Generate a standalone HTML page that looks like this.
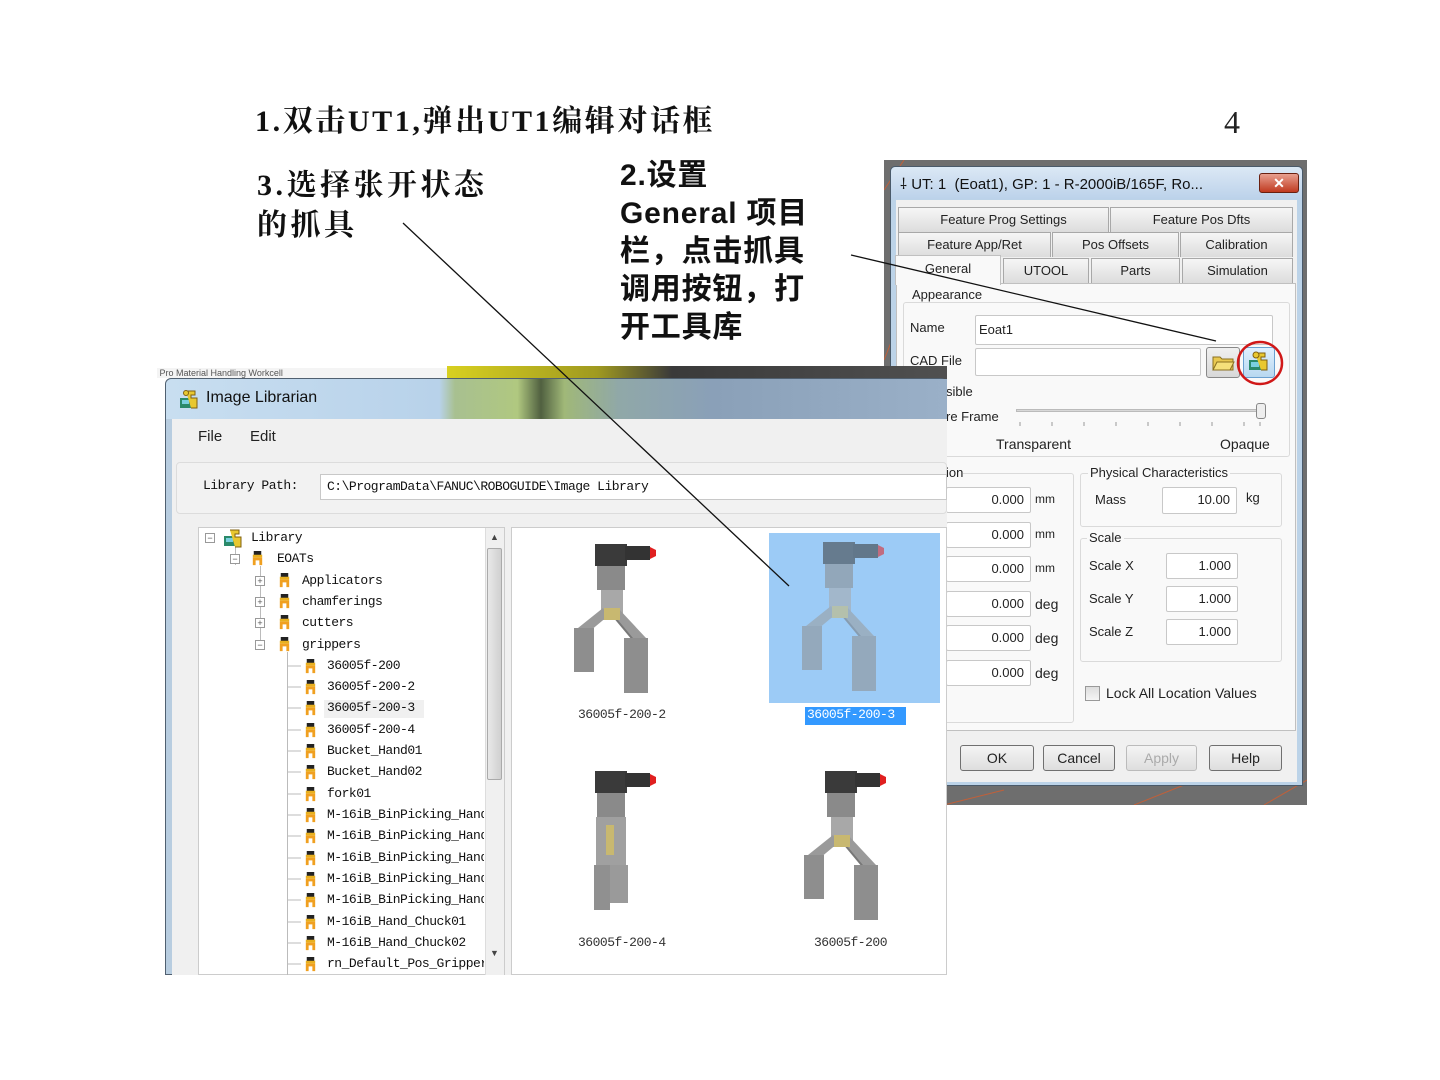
<!DOCTYPE html>
<html><head><meta charset="utf-8"><style>
*{margin:0;padding:0;box-sizing:border-box}
body{width:1440px;height:1080px;background:#fff;position:relative;overflow:hidden;font-family:"Liberation Sans","Noto Sans CJK SC",sans-serif}
.a{position:absolute}
.cn{font-family:"Liberation Serif","Noto Serif CJK SC",serif;font-weight:bold;font-size:30px;color:#111;white-space:nowrap}
.cs{font-family:"Liberation Sans","Noto Sans CJK SC",sans-serif;font-weight:bold;font-size:30px;color:#111;white-space:nowrap;line-height:38px;letter-spacing:0.8px}
.t{font-size:13px;color:#222;white-space:nowrap}
.tab{position:absolute;height:25px;border:1px solid #a8a8a8;border-bottom:none;background:linear-gradient(#f6f6f6,#dcdcdc);font-size:13px;text-align:center;line-height:24px;color:#222}
.in{position:absolute;background:#fff;border:1px solid #c8c8c8;border-radius:2px;font-size:13px;text-align:right;padding-right:6px;line-height:24px;color:#222}
.grp{position:absolute;border:1px solid #dadada;border-radius:3px}
.btn{position:absolute;height:26px;border:1px solid #707070;border-radius:3px;background:linear-gradient(#f4f4f4,#dedede);font-size:14px;text-align:center;line-height:24px;color:#222}
.tr{position:absolute;font-family:"Liberation Mono","Noto Serif CJK SC",monospace;font-size:13px;color:#111;white-space:nowrap;letter-spacing:-0.5px}
.ic{position:absolute;width:15px;height:15px}
.ex{position:absolute;width:10px;height:10px;border:1px solid #999;background:#fff;font-size:9px;line-height:8px;text-align:center;color:#555}
</style></head><body>

<div class="a cn" style="left:255px;top:96px;letter-spacing:2.6px">1.双击UT1,弹出UT1编辑对话框</div>
<div class="a" style="left:1224px;top:104px;font-family:'Liberation Serif',serif;font-size:32px;color:#222">4</div>
<div class="a cn" style="left:257px;top:166px;line-height:40px;letter-spacing:3.5px">3.选择张开状态<br>的抓具</div>
<div class="a cs" style="left:620px;top:157px">2.设置<br>General 项目<br>栏，点击抓具<br>调用按钮，打<br>开工具库</div>

<!-- Right dialog -->
<div class="a" style="left:884px;top:160px;width:423px;height:645px;background:#6e6e6e"></div>
<svg class="a" style="left:884px;top:160px" width="423" height="645"><g stroke="#c0603a" stroke-width="1" fill="none"><path d="M0 30 L20 0 M0 200 L8 180 M0 420 L6 410 M60 645 L120 630 M250 645 L300 625 M380 645 L423 620"/></g></svg>
<div class="a" style="left:890px;top:166px;width:413px;height:620px;background:#bcd3e8;border:1px solid #4a5a6a;border-radius:5px 5px 0 0"></div>
<div class="a" style="left:891px;top:167px;width:411px;height:32px;background:linear-gradient(#dbe8f5,#bcd2ea);border-radius:5px 5px 0 0"></div>
<div class="a t" style="left:900px;top:174px;font-size:15px;color:#111">⸸ UT: 1 &nbsp;(Eoat1), GP: 1 - R-2000iB/165F, Ro...</div>
<div class="a" style="left:1259px;top:173px;width:40px;height:20px;background:linear-gradient(#e8a090,#c03a20);border:1px solid #6a2010;border-radius:3px;color:#fff;font-size:14px;font-weight:bold;text-align:center;line-height:18px">✕</div>
<div class="a" style="left:896px;top:200px;width:401px;height:582px;background:#f0f0f0"></div>
<div class="tab" style="left:898px;top:207px;width:211px">Feature Prog Settings</div>
<div class="tab" style="left:1110px;top:207px;width:183px">Feature Pos Dfts</div>
<div class="tab" style="left:898px;top:232px;width:153px">Feature App/Ret</div>
<div class="tab" style="left:1052px;top:232px;width:127px">Pos Offsets</div>
<div class="tab" style="left:1180px;top:232px;width:113px">Calibration</div>
<div class="tab" style="left:1003px;top:258px;width:86px">UTOOL</div>
<div class="tab" style="left:1091px;top:258px;width:89px">Parts</div>
<div class="tab" style="left:1182px;top:258px;width:111px">Simulation</div>
<div class="a" style="left:896px;top:283px;width:400px;height:448px;background:#f9f9f9;border:1px solid #c0c0c0"></div>
<div class="tab" style="left:895px;top:255px;width:106px;height:30px;background:#f9f9f9;border-color:#c0c0c0;line-height:26px">General</div>
<div class="grp" style="left:903px;top:302px;width:387px;height:155px"></div>
<div class="a t" style="left:910px;top:287px;background:#f9f9f9;padding:0 2px">Appearance</div>
<div class="a t" style="left:910px;top:320px">Name</div>
<div class="in" style="left:975px;top:315px;width:298px;height:30px;text-align:left;padding-left:3px;line-height:28px">Eoat1</div>
<div class="a t" style="left:910px;top:353px">CAD File</div>
<div class="in" style="left:975px;top:348px;width:226px;height:28px"></div>
<div class="a" style="left:1206px;top:347px;width:34px;height:31px;border:1px solid #888;border-radius:3px;background:linear-gradient(#f0f0f0,#d8d8d8)"></div>
<svg class="a" style="left:1211px;top:352px" width="24" height="20"><path d="M2 5h7l2 2h11v11H2z" fill="#e8c850" stroke="#8a7020"/><path d="M2 18l4-8h17l-4 8z" fill="#f5e07a" stroke="#8a7020"/></svg>
<div class="a" style="left:1243px;top:347px;width:32px;height:31px;border:1px solid #6aa0d0;border-radius:3px;background:linear-gradient(#e0f0ff,#b8d8f0)"></div>
<svg class="a" style="left:1247px;top:350px" width="24" height="24"><rect x="2" y="10" width="12" height="10" fill="#2a8a6a"/><rect x="4" y="12" width="8" height="5" fill="#7ad0e0"/><path d="M8 3h10v4h-4v3h6v10h-6" fill="#e8c830" stroke="#806010"/><circle cx="9" cy="5" r="3" fill="#e8c830" stroke="#806010"/></svg>
<svg class="a" style="left:1234px;top:338px" width="52" height="52"><ellipse cx="26" cy="25" rx="22" ry="21" fill="none" stroke="#d01818" stroke-width="2.5"/></svg>
<div class="a t" style="left:946px;top:384px">sible</div>
<div class="a t" style="left:946px;top:409px">re Frame</div>
<div class="a" style="left:1016px;top:409px;width:246px;height:3px;background:#d8d8d8;border:1px solid #bbb"></div>
<div class="a" style="left:1256px;top:403px;width:10px;height:16px;background:#eee;border:1px solid #888;border-radius:3px"></div>
<svg class="a" style="left:1016px;top:422px" width="250" height="6"><g stroke="#999"><path d="M4 0v4M36 0v4M68 0v4M100 0v4M132 0v4M164 0v4M196 0v4M228 0v4M244 0v4"/></g></svg>
<div class="a t" style="left:996px;top:436px;font-size:14px">Transparent</div>
<div class="a t" style="left:1220px;top:436px;font-size:14px">Opaque</div>
<div class="grp" style="left:940px;top:473px;width:134px;height:250px"></div>
<div class="a t" style="left:946px;top:465px;background:#f9f9f9">ion</div>
<div class="in" style="left:946px;top:487px;width:85px;height:26px">0.000</div><div class="a t" style="left:1035px;top:492px;font-size:12px">mm</div>
<div class="in" style="left:946px;top:522px;width:85px;height:26px">0.000</div><div class="a t" style="left:1035px;top:527px;font-size:12px">mm</div>
<div class="in" style="left:946px;top:556px;width:85px;height:26px">0.000</div><div class="a t" style="left:1035px;top:561px;font-size:12px">mm</div>
<div class="in" style="left:946px;top:591px;width:85px;height:26px">0.000</div><div class="a t" style="left:1035px;top:596px;font-size:14px">deg</div>
<div class="in" style="left:946px;top:625px;width:85px;height:26px">0.000</div><div class="a t" style="left:1035px;top:630px;font-size:14px">deg</div>
<div class="in" style="left:946px;top:660px;width:85px;height:26px">0.000</div><div class="a t" style="left:1035px;top:665px;font-size:14px">deg</div>
<div class="grp" style="left:1080px;top:473px;width:202px;height:54px"></div>
<div class="a t" style="left:1088px;top:465px;background:#f9f9f9;padding:0 2px">Physical Characteristics</div>
<div class="a t" style="left:1095px;top:492px">Mass</div>
<div class="in" style="left:1162px;top:487px;width:75px;height:27px">10.00</div>
<div class="a t" style="left:1246px;top:490px">kg</div>
<div class="grp" style="left:1080px;top:538px;width:202px;height:124px"></div>
<div class="a t" style="left:1087px;top:530px;background:#f9f9f9;padding:0 2px">Scale</div>
<div class="a t" style="left:1089px;top:558px">Scale X</div><div class="in" style="left:1166px;top:553px;width:72px;height:26px">1.000</div>
<div class="a t" style="left:1089px;top:591px">Scale Y</div><div class="in" style="left:1166px;top:586px;width:72px;height:26px">1.000</div>
<div class="a t" style="left:1089px;top:624px">Scale Z</div><div class="in" style="left:1166px;top:619px;width:72px;height:26px">1.000</div>
<div class="a" style="left:1085px;top:686px;width:15px;height:15px;border:1px solid #999;background:linear-gradient(#ddd,#f5f5f5)"></div>
<div class="a t" style="left:1106px;top:685px;font-size:14px">Lock All Location Values</div>
<div class="btn" style="left:960px;top:745px;width:74px">OK</div>
<div class="btn" style="left:1043px;top:745px;width:72px">Cancel</div>
<div class="btn" style="left:1126px;top:745px;width:71px;color:#aaa;border-color:#bbb">Apply</div>
<div class="btn" style="left:1209px;top:745px;width:73px">Help</div>

<!-- Left window -->
<div class="a" style="left:157px;top:368px;width:290px;height:10px;background:#f4f4f4;font-size:9px;color:#555;line-height:10px;overflow:hidden">&nbsp;Pro Material Handling Workcell</div>
<div class="a" style="left:447px;top:366px;width:500px;height:14px;background:linear-gradient(90deg,#d8d020,#a09a20 30%,#3a3a3a 45%,#505050)"></div>
<div class="a" style="left:165px;top:378px;width:782px;height:597px;background:#b8cde0;border:1px solid #506070;border-radius:6px 6px 0 0"></div>
<div class="a" style="left:166px;top:379px;width:781px;height:40px;border-radius:6px 0 0 0;background:linear-gradient(90deg,#c8def0 0%,#b8d2ea 35%,#a8c090 37%,#b0c880 45%,#506040 48%,#a0b878 51%,#90a8a8 58%,#8aa0b8 70%,#9ab0c8 100%)"></div>
<svg class="a" style="left:179px;top:389px" width="22" height="22"><rect x="1" y="9" width="11" height="10" fill="#2a8a6a"/><rect x="3" y="11" width="7" height="4" fill="#7ad0e0"/><path d="M7 2h9v4h-4v3h6v10h-6" fill="#e8c830" stroke="#806010"/><circle cx="7" cy="4" r="2.5" fill="#e8c830" stroke="#806010"/></svg>
<div class="a t" style="left:206px;top:389px;font-size:16px;color:#111">Image Librarian</div>
<div class="a" style="left:172px;top:419px;width:775px;height:556px;background:#f0f0f0"></div>
<div class="a t" style="left:198px;top:428px;font-size:15px">File</div>
<div class="a t" style="left:250px;top:428px;font-size:15px">Edit</div>
<div class="a" style="left:176px;top:462px;width:771px;height:52px;border:1px solid #dcdcdc;border-radius:4px;background:#f2f2f2"></div>
<div class="tr" style="left:203px;top:478px">Library Path:</div>
<div class="a" style="left:320px;top:474px;width:627px;height:26px;background:#fff;border:1px solid #c8c8c8"></div>
<div class="tr" style="left:327px;top:479px">C:\ProgramData\FANUC\ROBOGUIDE\Image Library</div>
<div class="a" style="left:198px;top:527px;width:307px;height:448px;background:#fff;border:1px solid #ccc"></div>
<div class="a" style="left:485px;top:528px;width:19px;height:447px;background:#f0f0f0;border-left:1px solid #ddd"></div>
<div class="a" style="left:487px;top:548px;width:15px;height:232px;background:linear-gradient(90deg,#e8e8e8,#d0d0d0);border:1px solid #aaa;border-radius:2px"></div>
<div class="a" style="left:490px;top:532px;font-size:9px;color:#444">▲</div>
<div class="a" style="left:490px;top:948px;font-size:9px;color:#444">▼</div>
<div class="a" style="left:511px;top:527px;width:436px;height:448px;background:#fff;border:1px solid #ccc"></div>

<div class="a" style="left:235px;top:545px;width:1px;height:20px;background:#bbb"></div>
<div class="a" style="left:260px;top:566px;width:1px;height:80px;background:#bbb"></div>
<div class="a" style="left:287px;top:652px;width:1px;height:323px;background:#bbb"></div>

<div class="ex" style="left:205px;top:533px">−</div>
<svg class="ic" style="left:223px;top:528px;width:22px;height:20px" viewBox="0 0 22 20"><rect x="1" y="8" width="11" height="10" fill="#2a8a6a"/><rect x="3" y="10" width="7" height="4" fill="#7ad0e0"/><path d="M7 2h9v4h-4v3h6v10h-6" fill="#e8c830" stroke="#806010"/></svg>
<div class="tr" style="left:251px;top:530px">Library</div>
<div class="ex" style="left:230px;top:554px">−</div>
<div class="tr" style="left:277px;top:551px">EOATs</div>
<div class="ex" style="left:255px;top:576px">+</div><div class="tr" style="left:302px;top:573px">Applicators</div>
<div class="ex" style="left:255px;top:597px">+</div><div class="tr" style="left:302px;top:594px">chamferings</div>
<div class="ex" style="left:255px;top:618px">+</div><div class="tr" style="left:302px;top:615px">cutters</div>
<div class="ex" style="left:255px;top:640px">−</div><div class="tr" style="left:302px;top:637px">grippers</div>
<svg width="0" height="0" style="position:absolute"><defs><symbol id="g" viewBox="0 0 16 16"><rect x="4" y="0" width="8" height="5" fill="#222"/><rect x="3" y="4" width="10" height="3" fill="#e8b020"/><path d="M3 7h10v8h-3v-5h-4v5H3z" fill="#f0a020"/></symbol></defs></svg>
<svg class="ic" style="left:250px;top:551px"><use href="#g"/></svg>
<svg class="ic" style="left:277px;top:573px"><use href="#g"/></svg>
<svg class="ic" style="left:277px;top:594px"><use href="#g"/></svg>
<svg class="ic" style="left:277px;top:615px"><use href="#g"/></svg>
<svg class="ic" style="left:277px;top:637px"><use href="#g"/></svg>

<div class="a" style="left:324px;top:700px;width:100px;height:18px;background:#f0f0f0"></div>
<div class="tr" style="left:327px;top:658px">36005f-200</div>
<div class="tr" style="left:327px;top:679px">36005f-200-2</div>
<div class="tr" style="left:327px;top:700px">36005f-200-3</div>
<div class="tr" style="left:327px;top:722px">36005f-200-4</div>
<div class="tr" style="left:327px;top:743px">Bucket_Hand01</div>
<div class="tr" style="left:327px;top:764px">Bucket_Hand02</div>
<div class="tr" style="left:327px;top:786px">fork01</div>
<div class="tr" style="left:327px;top:807px;width:157px;overflow:hidden">M-16iB_BinPicking_Hand</div>
<div class="tr" style="left:327px;top:828px;width:157px;overflow:hidden">M-16iB_BinPicking_Hand</div>
<div class="tr" style="left:327px;top:850px;width:157px;overflow:hidden">M-16iB_BinPicking_Hand</div>
<div class="tr" style="left:327px;top:871px;width:157px;overflow:hidden">M-16iB_BinPicking_Hand</div>
<div class="tr" style="left:327px;top:892px;width:157px;overflow:hidden">M-16iB_BinPicking_Hand</div>
<div class="tr" style="left:327px;top:914px">M-16iB_Hand_Chuck01</div>
<div class="tr" style="left:327px;top:935px">M-16iB_Hand_Chuck02</div>
<div class="tr" style="left:327px;top:956px;width:157px;height:19px;overflow:hidden">rn_Default_Pos_Gripper</div>
<svg class="a" style="left:287px;top:650px" width="40" height="325">
<g stroke="#bbb"><path d="M0 16h14M0 37h14M0 58h14M0 80h14M0 101h14M0 122h14M0 144h14M0 165h14M0 186h14M0 208h14M0 229h14M0 250h14M0 272h14M0 293h14M0 314h14"/></g>
<g><use href="#g" x="16" y="9" width="15" height="15"/><use href="#g" x="16" y="30" width="15" height="15"/><use href="#g" x="16" y="51" width="15" height="15"/><use href="#g" x="16" y="73" width="15" height="15"/><use href="#g" x="16" y="94" width="15" height="15"/><use href="#g" x="16" y="115" width="15" height="15"/><use href="#g" x="16" y="137" width="15" height="15"/><use href="#g" x="16" y="158" width="15" height="15"/><use href="#g" x="16" y="179" width="15" height="15"/><use href="#g" x="16" y="201" width="15" height="15"/><use href="#g" x="16" y="222" width="15" height="15"/><use href="#g" x="16" y="243" width="15" height="15"/><use href="#g" x="16" y="265" width="15" height="15"/><use href="#g" x="16" y="286" width="15" height="15"/><use href="#g" x="16" y="307" width="15" height="15"/></g>
</svg>

<svg width="0" height="0" style="position:absolute"><defs>
<symbol id="grip" viewBox="0 0 100 160">
<rect x="25" y="6" width="32" height="22" fill="#3a3a3a"/>
<rect x="55" y="8" width="25" height="14" fill="#333"/>
<path d="M80 9l6 3v6l-6 3z" fill="#e02020"/>
<rect x="27" y="28" width="28" height="24" fill="#8a8a8a"/>
<rect x="31" y="52" width="22" height="30" fill="#a8a8a8"/>
<path d="M33 70 L8 90 L14 98 L38 78z" fill="#9a9a9a"/>
<path d="M48 70 L76 100 L68 106 L44 80z" fill="#9a9a9a"/>
<path d="M40 74 L70 110" stroke="#777" stroke-width="2"/>
<rect x="34" y="70" width="16" height="12" fill="#c8b870"/>
<rect x="4" y="90" width="20" height="44" fill="#8e8e8e"/>
<rect x="54" y="100" width="24" height="55" fill="#8e8e8e"/>
</symbol>
<symbol id="grip4" viewBox="0 0 100 160">
<rect x="25" y="6" width="32" height="22" fill="#3a3a3a"/>
<rect x="55" y="8" width="25" height="14" fill="#333"/>
<path d="M80 9l6 3v6l-6 3z" fill="#e02020"/>
<rect x="27" y="28" width="28" height="24" fill="#8a8a8a"/>
<rect x="26" y="52" width="30" height="50" fill="#a0a0a0"/>
<rect x="36" y="60" width="8" height="30" fill="#c8b870"/>
<rect x="24" y="100" width="16" height="45" fill="#909090"/>
<rect x="40" y="100" width="18" height="38" fill="#9a9a9a"/>
</symbol></defs></svg>
<svg class="a" style="left:570px;top:538px" width="100" height="160"><use href="#grip"/></svg>
<div class="a" style="left:769px;top:533px;width:171px;height:170px;background:#9ccbf6"></div>
<svg class="a" style="left:798px;top:536px;opacity:.55" width="100" height="160"><use href="#grip"/></svg>
<svg class="a" style="left:570px;top:765px" width="100" height="160"><use href="#grip4"/></svg>
<svg class="a" style="left:800px;top:765px" width="100" height="160"><use href="#grip"/></svg>
<div class="tr" style="left:578px;top:707px;color:#333">36005f-200-2</div>
<div class="a tr" style="left:805px;top:707px;width:101px;height:18px;background:#3399ff;color:#fff;padding-left:2px">36005f-200-3</div>
<div class="tr" style="left:578px;top:935px;color:#333">36005f-200-4</div>
<div class="tr" style="left:814px;top:935px;color:#333">36005f-200</div>

<svg class="a" style="left:0;top:0" width="1440" height="1080"><g stroke="#111" stroke-width="1.3"><line x1="403" y1="223" x2="789" y2="586"/><line x1="851" y1="255" x2="1216" y2="341"/></g></svg>
</body></html>
